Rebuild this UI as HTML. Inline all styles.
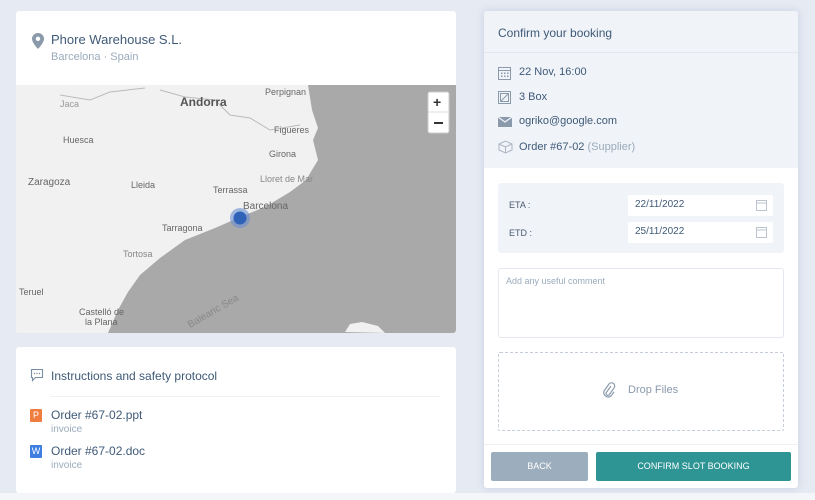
<!DOCTYPE html>
<html><head><style>
*{margin:0;padding:0;box-sizing:border-box}
body{width:815px;height:500px;background:#e5eaf3;font-family:"Liberation Sans",sans-serif;position:relative;overflow:hidden;color:#4a5a6e}
.abs{position:absolute}
.card{position:absolute;background:#fff;border-radius:3px}
.t{position:absolute;white-space:nowrap}
</style></head><body>
<div class="card" style="left:16px;top:11px;width:440px;height:322px;overflow:hidden">
  <svg class="abs" style="left:16px;top:22px" width="12" height="16" viewBox="0 0 12 16"><path d="M6 0C2.7 0 0 2.6 0 5.8 0 10 6 16 6 16s6-6 6-10.2C12 2.6 9.3 0 6 0z" fill="#8a9aab"/><circle cx="6" cy="5.8" r="2.2" fill="#fff"/></svg>
  <div class="t" style="left:35px;top:21px;font-size:13px;color:#3f5a78">Phore Warehouse S.L.</div>
  <div class="t" style="left:35px;top:40px;font-size:11px;color:#9aabbc">Barcelona · Spain</div>
  <svg class="abs" style="left:0;top:74px" width="440" height="248" viewBox="16 85 440 248">
    <rect x="16" y="85" width="440" height="248" fill="#f1f1f1"/>
    <path d="M308 85 L312 110 L318 128 L313 140 L318 160 L306 180 L290 192 L265 207 L245 215 L215 228 L185 240 L160 258 L140 275 L128 292 L118 310 L108 333 L456 333 L456 85 Z" fill="#a9a9a9"/>
    <path d="M345 332 L350 324 L362 322 L378 326 L385 333 Z" fill="#f1f1f1"/>
    <path d="M60 95 L90 100 L110 92 L145 88 M160 90 L185 97 L215 100 L230 115 L250 118 L270 130 L300 125" stroke="#bbb" fill="none" stroke-width="1"/>
    <g font-family="Liberation Sans" fill="#666" font-size="9">
      <text x="180" y="106" font-size="12" fill="#555" font-weight="bold">Andorra</text>
      <text x="265" y="95">Perpignan</text>
      <text x="63" y="143">Huesca</text>
      <text x="274" y="133">Figueres</text>
      <text x="269" y="157">Girona</text>
      <text x="28" y="185" font-size="10">Zaragoza</text>
      <text x="131" y="188">Lleida</text>
      <text x="213" y="193">Terrassa</text>
      <text x="260" y="182" fill="#888">Lloret de Mar</text>
      <text x="243" y="209" font-size="10">Barcelona</text>
      <text x="162" y="231">Tarragona</text>
      <text x="123" y="257" fill="#888">Tortosa</text>
      <text x="19" y="295">Teruel</text>
      <text x="79" y="315">Castelló de</text>
      <text x="85" y="325">la Plana</text>
      <text x="60" y="107" fill="#999">Jaca</text>
      <text x="190" y="328" fill="#888" font-size="10" transform="rotate(-30 190 328)">Balearic Sea</text>
    </g>
    <circle cx="240" cy="218" r="10" fill="#6a8fd0" opacity=".6"/>
    <circle cx="240" cy="218" r="6.5" fill="#2e63b8"/>
    <rect x="428" y="92" width="21" height="41" rx="2" fill="#fff" stroke="#ccc"/>
    <line x1="428" y1="112" x2="449" y2="112" stroke="#ddd"/>
    <text x="433" y="107" font-size="14" font-weight="bold" fill="#333" font-family="Liberation Sans">+</text>
    <rect x="434" y="122" width="9" height="2" fill="#333"/>
  </svg>
</div>
<div class="card" style="left:16px;top:347px;width:440px;height:146px">
  <svg class="abs" style="left:14px;top:21px" width="14" height="14" viewBox="0 0 14 14"><path d="M1.5 1.5h11v8h-7l-3 3v-3h-1z" fill="none" stroke="#7a8ea3" stroke-width="1.1"/><circle cx="4.5" cy="5.5" r=".7" fill="#7a8ea3"/><circle cx="7" cy="5.5" r=".7" fill="#7a8ea3"/><circle cx="9.5" cy="5.5" r=".7" fill="#7a8ea3"/></svg>
  <div class="t" style="left:35px;top:22px;font-size:12px;color:#3f5a78">Instructions and safety protocol</div>
  <div class="abs" style="left:34px;top:49px;width:390px;height:1px;background:#eef0f3"></div>
  <div class="abs" style="left:14px;top:62px;width:12px;height:13px;background:#ef7d3f;color:#fff;font-size:9px;text-align:center;line-height:13px;border-radius:1px">P</div>
  <div class="t" style="left:35px;top:61px;font-size:12px;color:#3f5a78">Order #67-02.ppt</div>
  <div class="t" style="left:35px;top:77px;font-size:10px;color:#9aabbc">invoice</div>
  <div class="abs" style="left:14px;top:98px;width:12px;height:13px;background:#3d7ee0;color:#fff;font-size:9px;text-align:center;line-height:13px;border-radius:1px">W</div>
  <div class="t" style="left:35px;top:97px;font-size:12px;color:#3f5a78">Order #67-02.doc</div>
  <div class="t" style="left:35px;top:113px;font-size:10px;color:#9aabbc">invoice</div>
</div>
<div class="abs" style="left:0;top:493px;width:815px;height:7px;background:#f4f6fa"></div>
<div class="card" style="left:484px;top:11px;width:314px;height:477px;box-shadow:0 0 8px rgba(120,140,170,.25);overflow:hidden">
  <div class="abs" style="left:0;top:0;width:314px;height:157px;background:#f0f3f8"></div>
  <div class="abs" style="left:0;top:41px;width:314px;height:1px;background:#e3e7ee"></div>
  <div class="t" style="left:14px;top:15px;font-size:12px;color:#3f5a78">Confirm your booking</div>
  <svg class="abs" style="left:14px;top:55px" width="13" height="14" viewBox="0 0 13 14"><rect x=".5" y="1.5" width="12" height="12" fill="none" stroke="#8a9aab"/><line x1=".5" y1="4.5" x2="12.5" y2="4.5" stroke="#8a9aab"/><g fill="#8a9aab"><rect x="3" y="6.5" width="1.5" height="1.5"/><rect x="6" y="6.5" width="1.5" height="1.5"/><rect x="9" y="6.5" width="1.5" height="1.5"/><rect x="3" y="9.5" width="1.5" height="1.5"/><rect x="6" y="9.5" width="1.5" height="1.5"/><rect x="9" y="9.5" width="1.5" height="1.5"/></g></svg>
  <div class="t" style="left:35px;top:55px;font-size:11px;color:#3f5a78">22 Nov, 16:00</div>
  <svg class="abs" style="left:14px;top:80px" width="13" height="13" viewBox="0 0 13 13"><rect x=".5" y=".5" width="12" height="12" fill="none" stroke="#8a9aab"/><rect x="2.5" y="2.5" width="8" height="8" fill="none" stroke="#8a9aab"/><path d="M2.5 10.5l8-8" stroke="#8a9aab"/></svg>
  <div class="t" style="left:35px;top:80px;font-size:11px;color:#3f5a78">3 Box</div>
  <svg class="abs" style="left:14px;top:106px" width="14" height="10" viewBox="0 0 14 10"><rect width="14" height="10" fill="#8a9aab"/><path d="M0 0l7 5 7-5" fill="none" stroke="#f0f3f8" stroke-width="1.2"/></svg>
  <div class="t" style="left:35px;top:104px;font-size:11px;color:#3f5a78">ogriko@google.com</div>
  <svg class="abs" style="left:14px;top:129px" width="15" height="14" viewBox="0 0 15 14"><path d="M1 4l6.5-3 6.5 3v6l-6.5 3L1 10z M1 4l6.5 3 6.5-3 M7.5 7v6" fill="none" stroke="#aab6c3"/></svg>
  <div class="t" style="left:35px;top:130px;font-size:11px;color:#3f5a78">Order #67-02 <span style="color:#9aabbc">(Supplier)</span></div>
  <div class="abs" style="left:14px;top:172px;width:286px;height:70px;background:#f0f3f8;border-radius:3px"></div>
  <div class="t" style="left:25px;top:189px;font-size:9px;color:#4a5a6e">ETA :</div>
  <div class="t" style="left:25px;top:217px;font-size:9px;color:#4a5a6e">ETD :</div>
  <div class="abs" style="left:144px;top:184px;width:145px;height:21px;background:#fff;border-radius:2px"></div>
  <div class="abs" style="left:144px;top:211px;width:145px;height:21px;background:#fff;border-radius:2px"></div>
  <div class="t" style="left:151px;top:188px;font-size:10px;color:#3f5a78">22/11/2022</div>
  <div class="t" style="left:151px;top:215px;font-size:10px;color:#3f5a78">25/11/2022</div>
  <svg class="abs" style="left:272px;top:188px" width="11" height="12"><rect x=".5" y="1.5" width="10" height="10" fill="none" stroke="#bbc4ce"/><line x1="0" y1="4" x2="11" y2="4" stroke="#bbc4ce"/></svg>
  <svg class="abs" style="left:272px;top:215px" width="11" height="12"><rect x=".5" y="1.5" width="10" height="10" fill="none" stroke="#bbc4ce"/><line x1="0" y1="4" x2="11" y2="4" stroke="#bbc4ce"/></svg>
  <div class="abs" style="left:14px;top:257px;width:286px;height:70px;border:1px solid #e3e7ee;border-radius:3px"></div>
  <div class="t" style="left:22px;top:265px;font-size:9px;color:#9aabbc">Add any useful comment</div>
  <div class="abs" style="left:14px;top:341px;width:286px;height:79px;border:1px dashed #c5ced8;border-radius:2px"></div>
  <svg class="abs" style="left:118px;top:371px" width="14" height="17" viewBox="0 0 14 17"><path d="M9 4L4 11a2 2 0 0 0 3 2l5-7a3.2 3.2 0 0 0-5-4L2 9a4.5 4.5 0 0 0 7 5l3-4" fill="none" stroke="#8a9aab" stroke-width="1.2"/></svg>
  <div class="t" style="left:144px;top:373px;font-size:11px;color:#8a9aab">Drop Files</div>
  <div class="abs" style="left:0;top:433px;width:314px;height:1px;background:#eef0f3"></div>
  <div class="abs" style="left:7px;top:441px;width:97px;height:29px;background:#9caebe;border-radius:2px;color:#fff;font-size:9px;text-align:center;line-height:29px">BACK</div>
  <div class="abs" style="left:112px;top:441px;width:195px;height:29px;background:#2e9494;border-radius:2px;color:#fff;font-size:9px;text-align:center;line-height:29px">CONFIRM SLOT BOOKING</div>
</div>
</body></html>
